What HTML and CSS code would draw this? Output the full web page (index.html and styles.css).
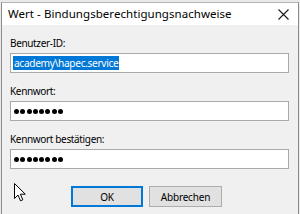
FILE: index.html
```html
<!DOCTYPE html>
<html lang="de">
<head>
<meta charset="utf-8">
<title>Wert - Bindungsberechtigungsnachweise</title>
<link rel="stylesheet" href="styles.css">
</head>
<body>
<div class="dialog">
  <div class="titlebar">
    <span class="title">Wert - Bindungsberechtigungsnachweise</span>
    <svg class="close" width="11" height="11" viewBox="0 0 11 11"><path d="M0.5 0.5 L10.5 10.5 M10.5 0.5 L0.5 10.5" stroke="#1a1a1a" stroke-width="1.1" fill="none"/></svg>
  </div>
  <div class="content">
    <div class="field">
      <label class="label">Benutzer-ID:</label>
      <div class="input"><span class="selected">academy\hapec.service</span></div>
    </div>
    <div class="field">
      <label class="label">Kennwort:</label>
      <div class="input"><span class="dots"><i></i><i></i><i></i><i></i><i></i><i></i><i></i><i></i></span></div>
    </div>
    <div class="field">
      <label class="label">Kennwort bestätigen:</label>
      <div class="input"><span class="dots"><i></i><i></i><i></i><i></i><i></i><i></i><i></i><i></i></span></div>
    </div>
    <div class="buttons">
      <button class="btn default">OK</button>
      <button class="btn">Abbrechen</button>
    </div>
  </div>
  <svg class="cursor" width="13" height="19" viewBox="0 0 13 19"><path d="M0.5 0.5 L0.5 15.5 L4 12 L6.5 17.8 L8.8 16.8 L6.4 11.2 L11.3 11.2 Z" fill="#fff" stroke="#000" stroke-width="1" stroke-linejoin="miter"/></svg>
</div>
</body>
</html>
```

FILE: styles.css
```css
html, body {
  margin: 0;
  padding: 0;
  height: 214px;
  overflow: hidden;
  background: #e9e9e9;
  font-family: "Noto Sans", "Open Sans", sans-serif;
  font-size: 10px;
  letter-spacing: -0.35px;
  color: #000;
}

.dialog {
  position: relative;
  margin: 2px 1px 0 1px;
  height: 211px;
  background: #f0f0f0;
  border: 1px solid #8c8c8c;
  border-top-color: #b5b5b5;
  border-bottom: none;
  overflow: hidden;
}

.titlebar {
  height: 22px;
  background: #fff;
  display: flex;
  align-items: center;
  justify-content: space-between;
  padding: 0 9px 0 6px;
}

.title {
  font-size: 11.5px;
  letter-spacing: 0.05px;
  line-height: 22px;
  color: #000;
}

.close {
  display: block;
}

.content {
  padding: 10px 9px 0 8px;
  display: flex;
  flex-direction: column;
}

.field {
  display: flex;
  flex-direction: column;
  gap: 2px;
  margin-bottom: 10px;
}

.label {
  line-height: 16px;
  height: 16px;
}

.input {
  height: 18px;
  background: #fff;
  border: 1px solid #a9a9a9;
  display: flex;
  align-items: center;
  padding: 0 2px;
}

.selected {
  background: #0078d7;
  color: #fff;
  line-height: 14px;
  padding: 0 1px;
  font-size: 10.2px;
}

.dots {
  display: flex;
  gap: 1.3px;
  padding-left: 1px;
}

.dots i {
  display: block;
  width: 5px;
  height: 5px;
  border-radius: 50%;
  background: #000;
}

.buttons {
  display: flex;
  gap: 6px;
  padding-left: 61px;
  margin-top: 7px;
}

.btn {
  width: 73px;
  height: 21px;
  font-family: "Noto Sans", "Open Sans", sans-serif;
  font-size: 10px;
  letter-spacing: -0.2px;
  color: #000;
  background: #e1e1e1;
  border: 1px solid #adadad;
  padding: 0;
  margin: 0;
}

.btn.default {
  width: 72px;
  border: 2px solid #0078d7;
}

.cursor {
  position: absolute;
  left: 12px;
  top: 180px;
}
```
